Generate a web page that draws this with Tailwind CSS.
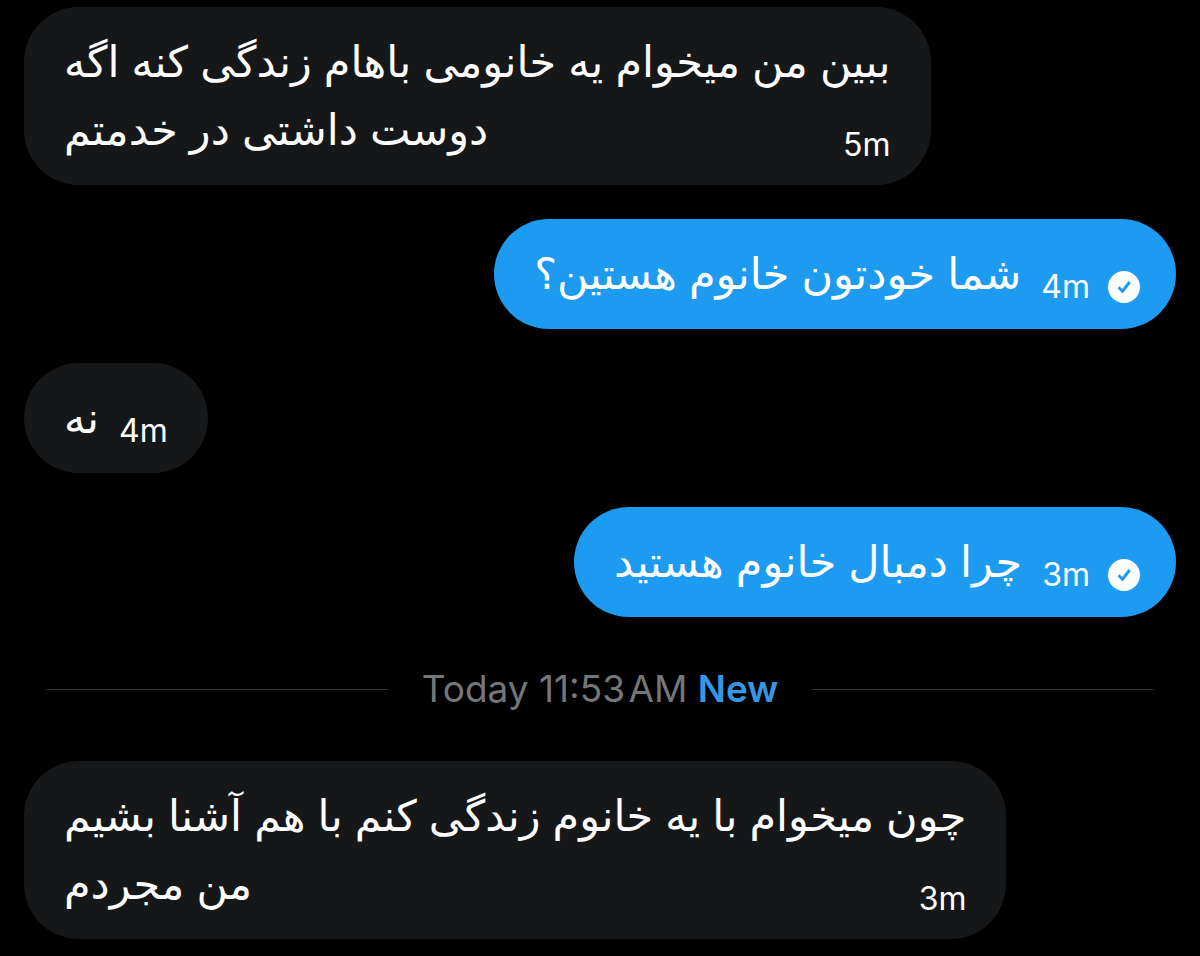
<!DOCTYPE html>
<html lang="fa">
<head>
  <meta charset="UTF-8" />
  <meta name="viewport" content="width=device-width, initial-scale=1.0" />
  <title>Messages</title>
  <script src="https://cdn.jsdelivr.net/npm/@tailwindcss/browser@4"></script>
</head>
<body class="bg-black text-white font-['Inter','DejaVu_Sans',sans-serif]">

  <main class="px-6 pt-[7px] pb-4">
    <ul class="flex flex-col gap-[34px]">

      <!-- Received -->
      <li class="relative self-start bg-[#161719] rounded-[55px] px-10 pt-5 pb-[22px]">
        <p dir="rtl" class="text-left text-[43px] leading-[68px]">ببین من میخوام یه خانومی باهام زندگی کنه اگه<br />دوست داشتی در خدمتم</p>
        <time class="absolute right-10 bottom-5 text-[32px] leading-10">5m</time>
      </li>

      <!-- Sent -->
      <li class="self-end flex items-end bg-[#1d9bf0] rounded-[55px] pl-10 pr-9 pt-5 pb-[22px]">
        <p dir="rtl" class="text-left text-[43px] leading-[68px]">شما خودتون خانوم هستین؟</p>
        <time class="ml-5 text-[32px] leading-10">4m</time>
        <svg class="ml-[18px] mb-1 size-8" viewBox="0 0 32 32" role="img" aria-label="Sent">
          <circle cx="16" cy="16" r="16" fill="#fff" />
          <path d="M10.5 16.2l4 4 7.2-9.2" fill="none" stroke="#1d9bf0" stroke-width="3" />
        </svg>
      </li>

      <!-- Received -->
      <li class="self-start flex items-end bg-[#161719] rounded-[55px] px-10 pt-5 pb-[22px]">
        <p dir="rtl" class="text-left text-[43px] leading-[68px]">نه</p>
        <time class="ml-5 text-[32px] leading-10">4m</time>
      </li>

      <!-- Sent -->
      <li class="self-end flex items-end bg-[#1d9bf0] rounded-[55px] pl-10 pr-9 pt-5 pb-[22px]">
        <p dir="rtl" class="text-left text-[43px] leading-[68px]">چرا دمبال خانوم هستید</p>
        <time class="ml-5 text-[32px] leading-10">3m</time>
        <svg class="ml-[18px] mb-1 size-8" viewBox="0 0 32 32" role="img" aria-label="Sent">
          <circle cx="16" cy="16" r="16" fill="#fff" />
          <path d="M10.5 16.2l4 4 7.2-9.2" fill="none" stroke="#1d9bf0" stroke-width="3" />
        </svg>
      </li>

      <!-- New messages divider -->
      <li class="flex items-center px-[22px] py-[15px] text-[37px] leading-[46px] text-[#75767a]">
        <span class="flex-1 h-px bg-[#2f3133]"></span>
        <span class="px-[34px] whitespace-nowrap">Today 11:53&#8202;AM <b class="font-semibold text-[#3597e3]">New</b></span>
        <span class="flex-1 h-px bg-[#2f3133]"></span>
      </li>

      <!-- Received -->
      <li class="relative self-start bg-[#161719] rounded-[55px] px-10 pt-5 pb-[22px]">
        <p dir="rtl" class="text-left text-[43px] leading-[68px]">چون میخوام با یه خانوم زندگی کنم با هم آشنا بشیم<br />من مجردم</p>
        <time class="absolute right-10 bottom-5 text-[32px] leading-10">3m</time>
      </li>
    </ul>
  </main>

</body>
</html>
